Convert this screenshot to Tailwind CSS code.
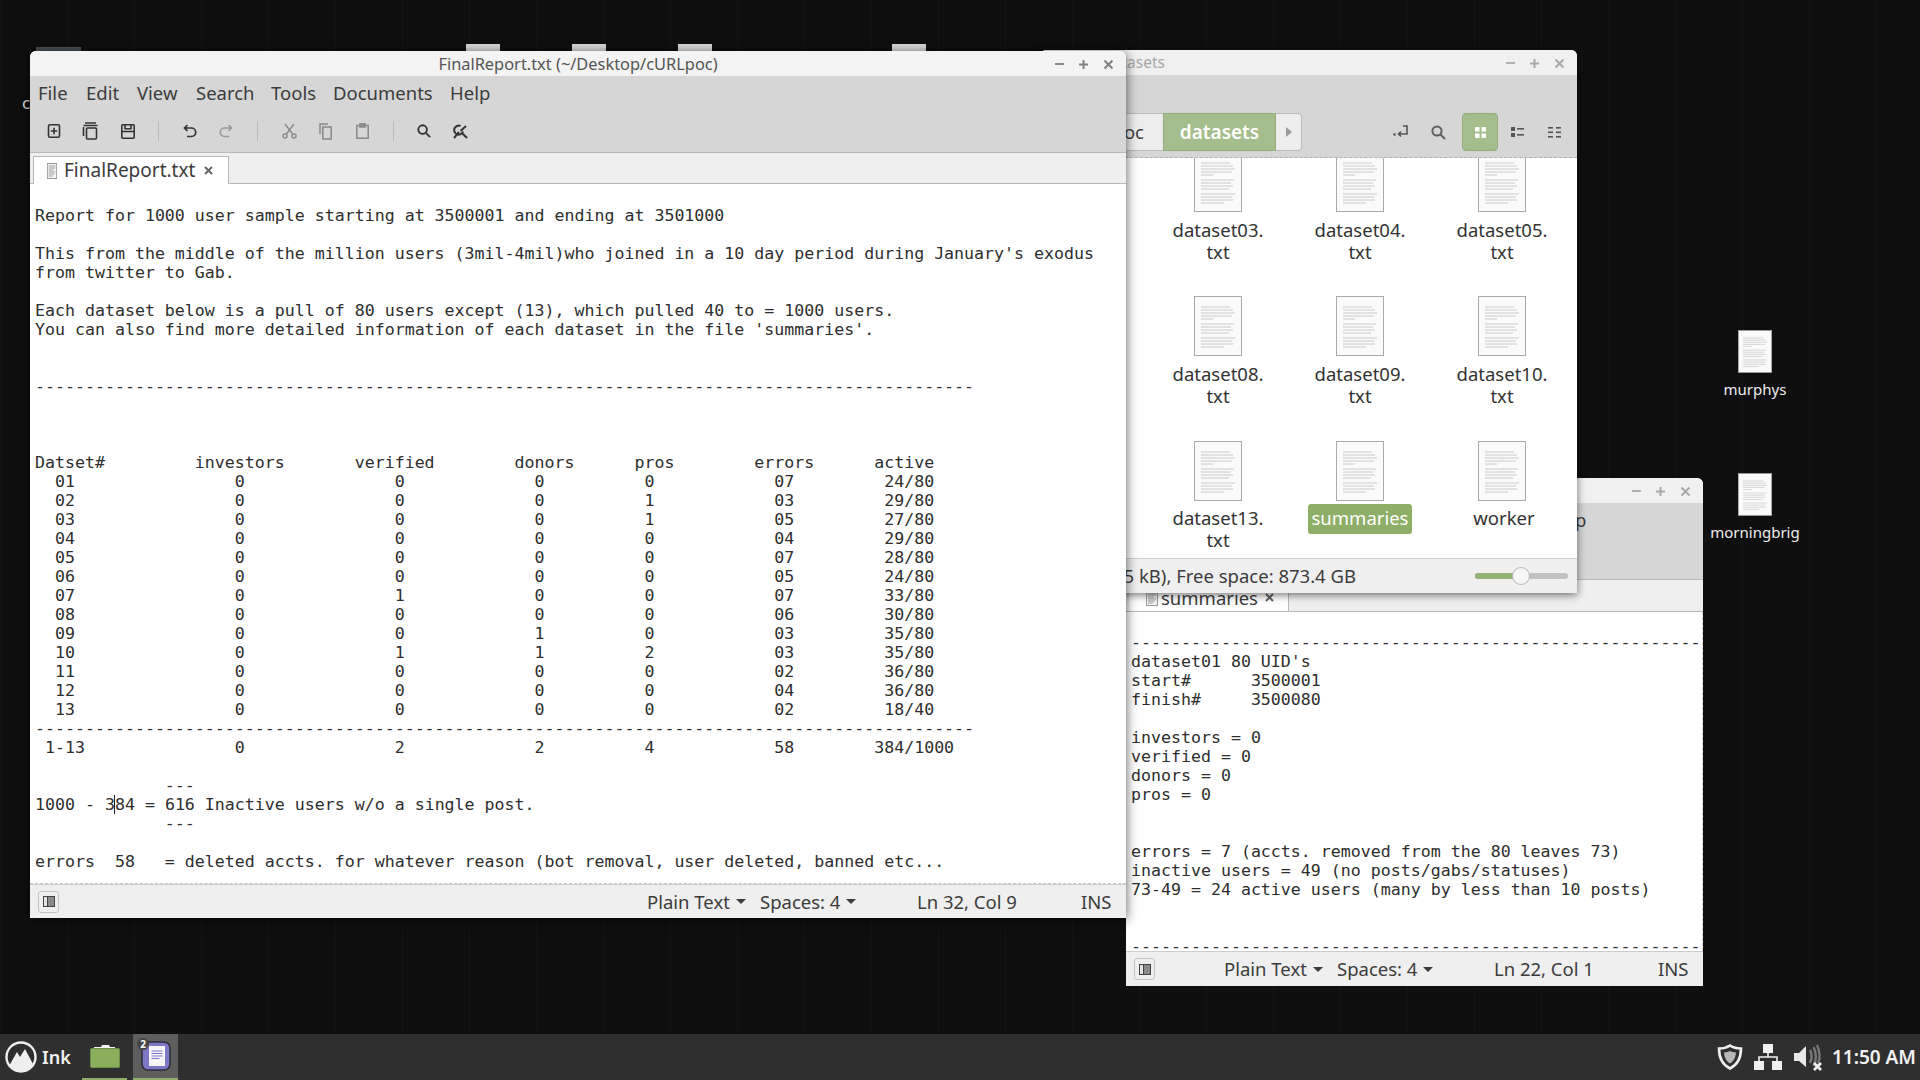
<!DOCTYPE html>
<html>
  <head>
    <meta charset="utf-8" />
    <title>Desktop</title>
    <script src="https://cdn.jsdelivr.net/npm/@tailwindcss/browser@4"></script>
  </head>
  <body class="w-[1920px] h-[1080px] overflow-hidden flex flex-col bg-[#0f0f0f] font-['Noto_Sans',sans-serif] text-[18.5px] text-[#3c3c3c]">
    <svg class="hidden">
      <symbol id="doc" viewBox="0 0 48 60">
        <rect x="0.5" y="0.5" width="47" height="59" fill="#fafafa" stroke="#aaaaaa" />
        <path d="M7 11h29M7 14h32M7 17h34M7 20h31M7 23h12M7 28h33M7 31h30M7 34h32M7 37h28M7 42h34M7 45h31M7 48h32M7 51h23" stroke="#bcbcbc" stroke-width="0.8" />
      </symbol>
      <symbol id="tabdoc" viewBox="0 0 12 16">
        <rect x="0.5" y="0.5" width="11" height="15" fill="#f4f4f4" stroke="#999999" />
        <path d="M2 3h8M2 5h8M2 7h6M2 9h8M2 11h7M2 13h5" stroke="#9a9a9a" />
      </symbol>
      <symbol id="tabclose" viewBox="0 0 9 9">
        <path d="M1 1l7 7M8 1l-7 7" stroke="#666666" stroke-width="2" />
      </symbol>
    </svg>

    <!-- desktop -->
    <div class="relative flex-1 bg-[repeating-linear-gradient(90deg,#141414_0,#141414_1px,transparent_1px,transparent_67px)]">
      <!-- window tops peeking out from behind -->
      <div class="absolute left-[36px] top-[47px] w-[45px] h-[6px] bg-[#4a4f57]"></div>
      <div class="absolute left-[466px] top-[44px] w-[34px] h-[8px] bg-[#d8d8d8]"></div>
      <div class="absolute left-[572px] top-[44px] w-[34px] h-[8px] bg-[#d8d8d8]"></div>
      <div class="absolute left-[678px] top-[44px] w-[34px] h-[8px] bg-[#d8d8d8]"></div>
      <div class="absolute left-[892px] top-[44px] w-[34px] h-[8px] bg-[#d8d8d8]"></div>
      <span class="absolute left-[22px] top-[90px] text-[#dddddd] text-[17px]">c</span>

      <!-- desktop icons -->
      <div class="absolute left-[1695px] top-[330px] w-[120px] flex flex-col items-center text-[#eeeeee] text-[15px]">
        <svg class="w-[34px] h-[43px] shrink-0"><use href="#doc" /></svg>
        <span class="mt-[5px]">murphys</span>
      </div>
      <div class="absolute left-[1695px] top-[473px] w-[120px] flex flex-col items-center text-[#eeeeee] text-[15px]">
        <svg class="w-[34px] h-[43px] shrink-0"><use href="#doc" /></svg>
        <span class="mt-[5px]">morningbrig</span>
      </div>

      <!-- summaries editor -->
      <div class="absolute left-[1126px] top-[478px] w-[577px] h-[508px] flex flex-col rounded-t-[6px] overflow-hidden bg-white">
        <div class="h-[25px] bg-[#f0f0f0] flex items-center justify-end pr-[12px] pt-px gap-[14px] text-[#a8a8a8]">
          <span class="w-[9px] h-[2px] bg-[#b0b0b0]"></span>
          <svg class="w-[11px] h-[11px]" viewBox="0 0 11 11"><path d="M5.5 1v9M1 5.5h9" stroke="#a8a8a8" stroke-width="2" /></svg>
          <svg class="w-[11px] h-[11px]" viewBox="0 0 11 11"><path d="M1.5 1.5l8 8M9.5 1.5l-8 8" stroke="#a8a8a8" stroke-width="2" /></svg>
        </div>
        <div class="h-[77px] bg-[#d6d6d6] border-b border-[#b8b8b8]">
          <div class="h-[34px] pl-[8px] flex items-center">
            <span class="w-[48px]">File</span><span class="w-[51px]">Edit</span><span class="w-[59px]">View</span><span class="w-[75px]">Search</span><span class="w-[62px]">Tools</span><span class="w-[117px]">Documents</span><span>Help</span>
          </div>
        </div>
        <div class="h-[32px] bg-[#efefef] border-b border-[#b8b8b8] flex">
          <div class="ml-[3px] w-[160px] bg-white border-r border-[#b8b8b8] flex items-center pl-[17px] pt-[4px]">
            <svg class="w-[12px] h-[16px] shrink-0"><use href="#tabdoc" /></svg>
            <span class="ml-[3px]">summaries</span>
            <svg class="w-[9px] h-[9px] ml-[7px] shrink-0"><use href="#tabclose" /></svg>
          </div>
        </div>
        <pre class="flex-1 overflow-hidden border-r border-dashed border-[#cccccc] pl-[5px] pt-[21px] font-['DejaVu_Sans_Mono',monospace] text-[16.6px] leading-[19px] text-[#2e2e2e]">---------------------------------------------------------
dataset01 80 UID's
start#      3500001
finish#     3500080

investors = 0
verified = 0
donors = 0
pros = 0


errors = 7 (accts. removed from the 80 leaves 73)
inactive users = 49 (no posts/gabs/statuses)
73-49 = 24 active users (many by less than 10 posts)


---------------------------------------------------------</pre>
        <div class="h-[35px] shrink-0 border-t border-[#cccccc] bg-[#efefef] flex items-center pl-[8px]">
          <div class="w-[21px] h-[22px] border border-[#c4c4c4] rounded-[3px] flex items-center justify-center">
            <div class="w-[12px] h-[11px] border border-[#444444] bg-[#8a8a8a] flex"><div class="w-[4px] bg-[#e4e4e4] border-r border-[#444444]"></div></div>
          </div>
          <div class="ml-auto flex items-center whitespace-nowrap">
            <span class="w-[113px] flex items-center gap-[6px]">Plain Text <i class="w-0 h-0 border-x-[5px] border-x-transparent border-t-[5px] border-t-[#3c3c3c]"></i></span>
            <span class="w-[157px] flex items-center gap-[6px]">Spaces: 4 <i class="w-0 h-0 border-x-[5px] border-x-transparent border-t-[5px] border-t-[#3c3c3c]"></i></span>
            <span class="w-[164px]">Ln 22, Col 1</span>
            <span class="w-[45px]">INS</span>
          </div>
        </div>
      </div>

      <!-- file manager -->
      <div class="absolute left-[1040px] top-[50px] w-[537px] h-[543px] flex flex-col rounded-t-[6px] overflow-hidden bg-white shadow-[0_2px_8px_rgba(0,0,0,0.55)]">
        <div class="relative h-[25px] shrink-0 bg-[#f0f0f0] flex items-center justify-end pr-[12px] pt-px gap-[14px]">
          <span class="absolute right-[412px] top-[1px] text-[15.5px] text-[#a8a8a8]">datasets</span>
          <span class="w-[9px] h-[2px] bg-[#b0b0b0]"></span>
          <svg class="w-[11px] h-[11px]" viewBox="0 0 11 11"><path d="M5.5 1v9M1 5.5h9" stroke="#a8a8a8" stroke-width="2" /></svg>
          <svg class="w-[11px] h-[11px]" viewBox="0 0 11 11"><path d="M1.5 1.5l8 8M9.5 1.5l-8 8" stroke="#a8a8a8" stroke-width="2" /></svg>
        </div>
        <div class="h-[83px] shrink-0 bg-[#d6d6d6] border-b border-dashed border-[#b4b4b4] flex items-end pb-[6px]">
          <div class="w-[123px] h-[38px] bg-[#ededed] border-y border-[#bcbcbc] flex items-center justify-end pr-[19px]">oc</div>
          <div class="w-[113px] h-[38px] bg-[#a5bd8c] border border-[#95ad7c] flex items-center justify-center text-white font-semibold text-[19px]">datasets</div>
          <div class="w-[26px] h-[38px] bg-[#ededed] border border-l-0 border-[#bcbcbc] rounded-r-[4px] flex items-center justify-center">
            <i class="w-0 h-0 border-y-[5px] border-y-transparent border-l-[6px] border-l-[#9a9a9a]"></i>
          </div>
          <div class="ml-[81px] w-[36px] h-[38px] flex items-center justify-center">
            <svg class="w-[16px] h-[14px]" viewBox="0 0 16 14" fill="none" stroke="#555555" stroke-width="1.6"><path d="M10 1h4v8H6M8 6.5L5.5 9 8 11.5" /><circle cx="1.5" cy="9.5" r="1.3" fill="#555555" stroke="none" /></svg>
          </div>
          <div class="ml-px w-[36px] h-[38px] flex items-center justify-center">
            <svg class="w-[15px] h-[15px]" viewBox="0 0 15 15" fill="none" stroke="#606060" stroke-width="2"><circle cx="6" cy="6" r="4.6" /><path d="M9.5 9.5L14 14" /></svg>
          </div>
          <div class="ml-[6px] w-[36px] h-[38px] bg-[#a5bd8c] border border-[#95ad7c] rounded-[4px] flex items-center justify-center">
            <svg class="w-[11px] h-[11px]" viewBox="0 0 11 11" fill="#ffffff"><rect width="4.5" height="4.5" /><rect x="6.5" width="4.5" height="4.5" /><rect y="6.5" width="4.5" height="4.5" /><rect x="6.5" y="6.5" width="4.5" height="4.5" /></svg>
          </div>
          <div class="ml-px w-[36px] h-[38px] flex items-center justify-center">
            <svg class="w-[13px] h-[10px]" viewBox="0 0 13 10" fill="#555555"><rect width="4" height="4" /><rect x="6" y="1" width="7" height="1.6" /><rect y="6" width="4" height="4" /><rect x="6" y="7" width="7" height="1.6" /></svg>
          </div>
          <div class="ml-px w-[36px] h-[38px] flex items-center justify-center">
            <svg class="w-[13px] h-[11px]" viewBox="0 0 13 11" fill="#555555"><rect width="5" height="1.6" /><rect x="8" width="5" height="1.6" /><rect y="4.5" width="5" height="1.6" /><rect x="8" y="4.5" width="5" height="1.6" /><rect y="9" width="5" height="1.6" /><rect x="8" y="9" width="5" height="1.6" /></svg>
          </div>
        </div>

        <!-- icon grid, the top row is scrolled partly out of view -->
        <div class="flex-1 overflow-hidden">
          <div class="grid grid-cols-[142px_142px_142px] justify-end pr-[4px] mt-[-6px] leading-[22px] text-center text-[#333333]">
            <div class="h-[144px] flex flex-col items-center"><svg class="w-[48px] h-[60px] shrink-0"><use href="#doc" /></svg><span class="mt-[7px] w-[110px]">dataset03.<br />txt</span></div>
            <div class="h-[144px] flex flex-col items-center"><svg class="w-[48px] h-[60px] shrink-0"><use href="#doc" /></svg><span class="mt-[7px] w-[110px]">dataset04.<br />txt</span></div>
            <div class="h-[144px] flex flex-col items-center"><svg class="w-[48px] h-[60px] shrink-0"><use href="#doc" /></svg><span class="mt-[7px] w-[110px]">dataset05.<br />txt</span></div>
            <div class="h-[145px] flex flex-col items-center"><svg class="w-[48px] h-[60px] shrink-0"><use href="#doc" /></svg><span class="mt-[7px] w-[110px]">dataset08.<br />txt</span></div>
            <div class="h-[145px] flex flex-col items-center"><svg class="w-[48px] h-[60px] shrink-0"><use href="#doc" /></svg><span class="mt-[7px] w-[110px]">dataset09.<br />txt</span></div>
            <div class="h-[145px] flex flex-col items-center"><svg class="w-[48px] h-[60px] shrink-0"><use href="#doc" /></svg><span class="mt-[7px] w-[110px]">dataset10.<br />txt</span></div>
            <div class="h-[115px] flex flex-col items-center"><svg class="w-[48px] h-[60px] shrink-0"><use href="#doc" /></svg><span class="mt-[6px] w-[110px]">dataset13.<br />txt</span></div>
            <div class="h-[115px] flex flex-col items-center"><svg class="w-[48px] h-[60px] shrink-0"><use href="#doc" /></svg><span class="mt-[3px] w-[104px] h-[30px] leading-[28px] rounded-[3px] bg-[#8fae68] text-white">summaries</span></div>
            <div class="h-[115px] flex flex-col items-center"><svg class="w-[48px] h-[60px] shrink-0"><use href="#doc" /></svg><span class="mt-[6px] w-[110px] pl-[4px]">worker</span></div>
          </div>
        </div>
        <div class="h-[35px] shrink-0 border-t border-[#cccccc] bg-[#efefef] flex items-center">
          <span class="w-[316px] shrink-0 flex justify-end whitespace-nowrap">"summaries" selected (5 kB), Free space: 873.4 GB</span>
          <div class="relative ml-[119px] w-[93px] h-[6px] rounded-full bg-[#c2c2c2]">
            <div class="w-[46px] h-[6px] rounded-full bg-[#93b373]"></div>
            <div class="absolute left-[37px] top-[-6px] w-[18px] h-[18px] rounded-full bg-[#f6f6f6] border border-[#b8b8b8]"></div>
          </div>
        </div>
      </div>

      <!-- FinalReport editor -->
      <div class="absolute left-[30px] top-[51px] w-[1096px] h-[867px] flex flex-col rounded-t-[6px] overflow-hidden bg-white shadow-[0_2px_12px_rgba(0,0,0,0.65)]">
        <div class="relative h-[25px] shrink-0 bg-[#f3f3f3] flex items-center justify-end pr-[12px] pt-px gap-[14px]">
          <span class="absolute inset-x-0 top-[1px] text-center text-[16.4px] text-[#555555]">FinalReport.txt (~/Desktop/cURLpoc)</span>
          <span class="w-[9px] h-[2px] bg-[#8a8a8a]"></span>
          <svg class="w-[11px] h-[11px]" viewBox="0 0 11 11"><path d="M5.5 1v9M1 5.5h9" stroke="#808080" stroke-width="2" /></svg>
          <svg class="w-[11px] h-[11px]" viewBox="0 0 11 11"><path d="M1.5 1.5l8 8M9.5 1.5l-8 8" stroke="#808080" stroke-width="2" /></svg>
        </div>
        <div class="h-[77px] shrink-0 bg-[#d6d6d6] border-b border-[#b8b8b8]">
          <div class="h-[34px] pl-[8px] flex items-center">
            <span class="w-[48px]">File</span><span class="w-[51px]">Edit</span><span class="w-[59px]">View</span><span class="w-[75px]">Search</span><span class="w-[62px]">Tools</span><span class="w-[117px]">Documents</span><span>Help</span>
          </div>
          <div class="h-[40px] pl-[5px] pt-[2px] flex items-center">
            <span class="w-[37px] flex justify-center">
              <svg class="w-[14px] h-[14px]" viewBox="0 0 14 14" fill="none" stroke="#333333" stroke-width="1.6"><rect x="1.5" y="0.8" width="11" height="12.4" rx="1.5" /><path d="M7 3.8v6.4M3.8 7h6.4" /></svg>
            </span>
            <span class="w-[37px] flex justify-center">
              <svg class="w-[17px] h-[18px]" viewBox="0 0 17 18" fill="none" stroke="#333333" stroke-width="1.6"><path d="M3 1h11M1.5 3.5h14" /><path d="M1.5 5v9" /><rect x="4.5" y="6" width="10" height="11" rx="1" /></svg>
            </span>
            <span class="w-[37px] flex justify-center">
              <svg class="w-[14px] h-[15px]" viewBox="0 0 14 15" fill="none" stroke="#333333" stroke-width="1.6"><rect x="0.8" y="0.8" width="12.4" height="13.4" rx="1" /><path d="M1 7.5h12M4 1v3.8h6V1" /></svg>
            </span>
            <span class="ml-[12px] w-px h-[20px] bg-[#bbbbbb]"></span>
            <span class="ml-[13px] w-[36px] flex justify-center">
              <svg class="w-[14px] h-[14px]" viewBox="0 0 14 14" fill="none" stroke="#333333" stroke-width="1.7"><path d="M4.5 1L1.5 4l3 3M2 4h6.5a4 4 0 0 1 0 8.5H4" /></svg>
            </span>
            <span class="w-[36px] flex justify-center">
              <svg class="w-[14px] h-[14px]" viewBox="0 0 14 14" fill="none" stroke="#999999" stroke-width="1.7"><path d="M9.5 1l3 3-3 3M12 4H5.5a4 4 0 0 0 0 8.5H10" /></svg>
            </span>
            <span class="ml-[13px] w-px h-[20px] bg-[#bbbbbb]"></span>
            <span class="ml-[13px] w-[36px] flex justify-center">
              <svg class="w-[15px] h-[16px]" viewBox="0 0 15 16" fill="none" stroke="#8c8c8c" stroke-width="1.5"><circle cx="3" cy="13" r="2" /><circle cx="12" cy="13" r="2" /><path d="M4 11.5L12 1M11 11.5L3 1" /></svg>
            </span>
            <span class="w-[37px] flex justify-center">
              <svg class="w-[13px] h-[17px]" viewBox="0 0 13 17" fill="none" stroke="#8c8c8c" stroke-width="1.6"><path d="M1 11V1h8" /><rect x="3.8" y="4" width="8.4" height="12" /></svg>
            </span>
            <span class="w-[37px] flex justify-center">
              <svg class="w-[13px] h-[16px]" viewBox="0 0 13 16" fill="none" stroke="#8c8c8c" stroke-width="1.6"><rect x="0.8" y="2.5" width="11.4" height="12.7" /><rect x="4" y="0.8" width="5" height="3.2" fill="#8c8c8c" /></svg>
            </span>
            <span class="ml-[12px] w-px h-[20px] bg-[#bbbbbb]"></span>
            <span class="ml-[12px] w-[36px] flex justify-center">
              <svg class="w-[14px] h-[14px]" viewBox="0 0 15 15" fill="none" stroke="#333333" stroke-width="2"><circle cx="6" cy="6" r="4.6" /><path d="M9.5 9.5L14 14" /></svg>
            </span>
            <span class="w-[37px] flex justify-center">
              <svg class="w-[15px] h-[15px]" viewBox="0 0 15 15" fill="none" stroke="#333333" stroke-width="2"><path d="M10 7.500a4.500 4.500 0 1 1-2.500-5.500M9.500 9.500L14 14M1 14L6 8M13 2L7.500 7" /></svg>
            </span>
          </div>
        </div>
        <div class="h-[31px] shrink-0 bg-[#efefef] border-b border-[#b8b8b8] flex">
          <div class="ml-[3px] mt-[3px] w-[196px] h-[28px] bg-white border border-b-0 border-[#b8b8b8] flex items-center pl-[13px]">
            <svg class="w-[10px] h-[16px] shrink-0" viewBox="0 0 12 16" preserveAspectRatio="none"><use href="#tabdoc" /></svg>
            <span class="ml-[7px] text-[19px]">FinalReport.txt</span>
            <svg class="w-[9px] h-[9px] ml-[9px] shrink-0"><use href="#tabclose" /></svg>
          </div>
        </div>
        <pre class="flex-1 overflow-hidden pl-[5px] pt-[22px] font-['DejaVu_Sans_Mono',monospace] text-[16.6px] leading-[19px] text-[#2e2e2e]">Report for 1000 user sample starting at 3500001 and ending at 3501000

This from the middle of the million users (3mil-4mil)who joined in a 10 day period during January's exodus
from twitter to Gab.

Each dataset below is a pull of 80 users except (13), which pulled 40 to = 1000 users.
You can also find more detailed information of each dataset in the file 'summaries'.


----------------------------------------------------------------------------------------------



Datset#         investors       verified        donors      pros        errors      active
  01                0               0             0          0            07         24/80
  02                0               0             0          1            03         29/80
  03                0               0             0          1            05         27/80
  04                0               0             0          0            04         29/80
  05                0               0             0          0            07         28/80
  06                0               0             0          0            05         24/80
  07                0               1             0          0            07         33/80
  08                0               0             0          0            06         30/80
  09                0               0             1          0            03         35/80
  10                0               1             1          2            03         35/80
  11                0               0             0          0            02         36/80
  12                0               0             0          0            04         36/80
  13                0               0             0          0            02         18/40
----------------------------------------------------------------------------------------------
 1-13               0               2             2          4            58        384/1000

             ---
1000 - 3<span class="border-l border-[#222222] -ml-px">84</span> = 616 Inactive users w/o a single post.
             ---

errors  58   = deleted accts. for whatever reason (bot removal, user deleted, banned etc...</pre>
        <div class="h-[35px] shrink-0 border-t border-dashed border-[#c8c8c8]">
          <div class="h-[34px] border-t border-[#cccccc] bg-[#efefef] flex items-center pl-[8px]">
            <div class="w-[21px] h-[22px] border border-[#c4c4c4] rounded-[3px] flex items-center justify-center">
              <div class="w-[12px] h-[11px] border border-[#444444] bg-[#8a8a8a] flex"><div class="w-[4px] bg-[#e4e4e4] border-r border-[#444444]"></div></div>
            </div>
            <div class="ml-auto flex items-center whitespace-nowrap">
              <span class="w-[113px] flex items-center gap-[6px]">Plain Text <i class="w-0 h-0 border-x-[5px] border-x-transparent border-t-[5px] border-t-[#3c3c3c]"></i></span>
              <span class="w-[157px] flex items-center gap-[6px]">Spaces: 4 <i class="w-0 h-0 border-x-[5px] border-x-transparent border-t-[5px] border-t-[#3c3c3c]"></i></span>
              <span class="w-[164px]">Ln 32, Col 9</span>
              <span class="w-[45px]">INS</span>
            </div>
          </div>
        </div>
      </div>
    </div>

    <!-- panel -->
    <div class="h-[46px] shrink-0 bg-[#2f2f2f] flex items-stretch text-[#f2f2f2]">
      <div class="flex items-center pl-[5px] w-[82px]">
        <svg class="w-[32px] h-[32px]" viewBox="0 0 32 32">
          <circle cx="16" cy="16" r="14.5" fill="#2f2f2f" stroke="#efefef" stroke-width="2.4" />
          <path d="M4 25L12 11l3 5 5-8 8 15a14 14 0 0 1-24 2z" fill="#efefef" />
        </svg>
        <span class="ml-[5px] text-[18px] font-semibold">Ink</span>
      </div>
      <div class="w-[45px] flex items-center justify-center border-b-2 border-[#8fae68]">
        <svg class="w-[30px] h-[24px]" viewBox="0 0 30 24">
          <path d="M4 3h7l1-2h7l1 2h5v3H4z" fill="#f4f4f4" />
          <rect x="0.5" y="4.5" width="29" height="19" rx="1" fill="#8aae5c" stroke="#6d8c47" />
        </svg>
      </div>
      <div class="relative ml-[6px] w-[45px] bg-[#5e5e5e] flex items-center justify-center border-b-2 border-[#8fae68]">
        <svg class="w-[30px] h-[30px]" viewBox="0 0 30 30">
          <rect x="1" y="1" width="28" height="28" rx="6" fill="#7d78c4" stroke="#2c2c3c" stroke-width="1.5" />
          <rect x="8" y="5" width="16" height="20" fill="#f6f6fa" />
          <path d="M10.500 10h11M10.500 12.500h11M10.500 15h11M10.500 17.500h8" stroke="#7d78c4" />
        </svg>
        <span class="absolute left-[4px] top-[4px] w-[12px] h-[12px] rounded-full bg-[#444444] flex items-center justify-center text-[10px] font-bold text-white">2</span>
      </div>
      <div class="ml-auto flex items-center pr-[4px]">
        <svg class="w-[28px] h-[28px] mr-[10px]" viewBox="0 0 28 28" fill="none" stroke="#efefef" stroke-width="2.6">
          <path d="M14 2.500c3 2 6.500 3 11 3 0 9-3 16-11 20-8-4-11-11-11-20 4.500 0 8-1 11-3z" />
          <path d="M14 8c1.500 .8 3.500 1.300 6 1.500-.5 5-2 8.500-6 11-4-2.500-5.500-6-6-11 2.500-.2 4.500-.7 6-1.500z" fill="#b8b8b8" stroke="none" />
        </svg>
        <svg class="w-[28px] h-[28px] mr-[11px]" viewBox="0 0 28 28" fill="#efefef">
          <rect x="9" y="1" width="10" height="9" />
          <rect x="0" y="18" width="10" height="9" />
          <rect x="18" y="18" width="10" height="9" />
          <path d="M14 10v4M5 18v-4h18v4" fill="none" stroke="#efefef" stroke-width="1.600" />
        </svg>
        <svg class="w-[30px] h-[30px] mr-[9px]" viewBox="0 0 30 30" fill="none">
          <path d="M1 11h5l7-7v21l-7-6H1z" fill="#e8e8e8" />
          <path d="M17 8c2 4 2 9 0 13M20.500 5c3 6 3 13 0 19M24 3c3 7 3 14 1 18" stroke="#777777" stroke-width="2.400" />
          <path d="M21 21l7 7M28 21l-7 7" stroke="#efefef" stroke-width="2.800" />
        </svg>
        <span class="text-[19px] font-semibold whitespace-nowrap">11:50 AM</span>
      </div>
    </div>
  </body>
</html>
